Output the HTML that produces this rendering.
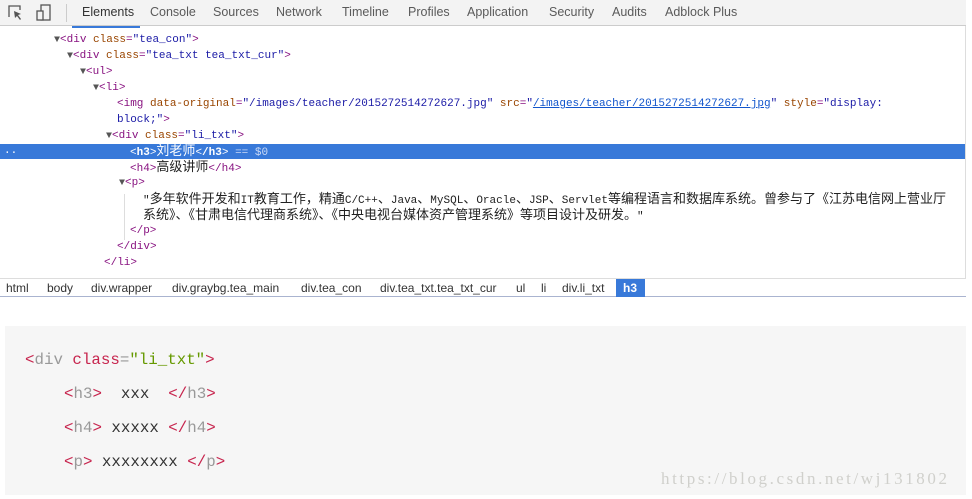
<!DOCTYPE html>
<html><head><meta charset="utf-8"><style>
*{margin:0;padding:0;box-sizing:border-box}
body{width:972px;height:499px;background:#fff;position:relative;overflow:hidden;font-family:"Liberation Sans","Noto Sans CJK SC",sans-serif}
.tb{position:absolute;left:0;top:0;width:966px;height:26px;background:#f3f3f3;border-bottom:1px solid #ccc}
.tab{position:absolute;top:5px;font-size:12.5px;color:#5a5a5a}
.ln{position:absolute;font-family:"Liberation Mono","Noto Sans CJK SC",monospace;font-size:11px;white-space:pre;color:#881280;line-height:16px;height:16px}
.c{font-family:"Noto Sans CJK SC",sans-serif;font-size:13px;line-height:13px}
.a{color:#994500}.v{color:#1a1aa6}.t{color:#222}.tri{color:#555;font-size:10px}
.bc{position:absolute;top:281px;font-size:12px;color:#333}
.code{position:absolute;font-family:"Liberation Mono",monospace;font-size:15.8px;white-space:pre;color:#333}
.r{color:#c7254e}.g{color:#999}.o{color:#690}
</style></head><body>
<div class="tb">
<svg style="position:absolute;left:8px;top:5px" width="16" height="16"><path d="M1 12V1h11v4" fill="none" stroke="#555" stroke-width="1.3"/><path d="M6 6l7 3-3 1 3 4-1 1-3-4-2 2z" fill="#555"/></svg>
<svg style="position:absolute;left:36px;top:4px" width="16" height="18"><rect x="5" y="1" width="9" height="15" fill="none" stroke="#555" stroke-width="1.3"/><rect x="1" y="7" width="6" height="9" fill="#f3f3f3" stroke="#555" stroke-width="1.3"/></svg>
<div style="position:absolute;left:66px;top:4px;width:1px;height:18px;background:#ccc"></div>
<span class="tab" style="left:82px;color:#333">Elements</span>
<span class="tab" style="left:150px">Console</span>
<span class="tab" style="left:213px">Sources</span>
<span class="tab" style="left:276px">Network</span>
<span class="tab" style="left:342px">Timeline</span>
<span class="tab" style="left:408px">Profiles</span>
<span class="tab" style="left:467px">Application</span>
<span class="tab" style="left:549px">Security</span>
<span class="tab" style="left:612px">Audits</span>
<span class="tab" style="left:665px">Adblock Plus</span>
</div>
<div style="position:absolute;left:72px;top:26px;width:68px;height:2px;background:#3879d9"></div>
<div style="position:absolute;left:965px;top:26px;width:1px;height:252px;background:#ddd"></div>
<div style="position:absolute;left:0;top:144px;width:965px;height:15px;background:#3879d9"></div>
<div style="position:absolute;left:124px;top:194px;width:1px;height:46px;background:#ddd"></div>
<div class="ln" style="left:54px;top:32px"><span class="tri">▼</span>&lt;div <span class="a">class</span>=<span class="v">"tea_con"</span>&gt;</div>
<div class="ln" style="left:67px;top:48px"><span class="tri">▼</span>&lt;div <span class="a">class</span>=<span class="v">"tea_txt tea_txt_cur"</span>&gt;</div>
<div class="ln" style="left:80px;top:64px"><span class="tri">▼</span>&lt;ul&gt;</div>
<div class="ln" style="left:93px;top:80px"><span class="tri">▼</span>&lt;li&gt;</div>
<div class="ln" style="left:117px;top:96px">&lt;img <span class="a">data-original</span>=<span class="v">"/images/teacher/2015272514272627.jpg"</span> <span class="a">src</span>=<span class="v">"<u style="color:#1155cc">/images/teacher/2015272514272627.jpg</u>"</span> <span class="a">style</span>=<span class="v">"display:</span></div>
<div class="ln" style="left:117px;top:112px"><span class="v">block;"</span>&gt;</div>
<div class="ln" style="left:106px;top:128px"><span class="tri">▼</span>&lt;div <span class="a">class</span>=<span class="v">"li_txt"</span>&gt;</div>
<div class="ln" style="left:4px;top:143px;color:#fff">..</div>
<div class="ln" style="left:130px;top:143px;color:#fff">&lt;<b>h3</b>&gt;<span class="c">刘老师</span>&lt;<b>/h3</b>&gt; <span style="color:#c9d8f5">== $0</span></div>
<div class="ln" style="left:130px;top:159px">&lt;h4&gt;<span class="t c">高级讲师</span>&lt;/h4&gt;</div>
<div class="ln" style="left:119px;top:175px"><span class="tri">▼</span>&lt;p&gt;</div>
<div class="ln t" style="left:143px;top:191px">"<span class="c">多年软件开发和</span>IT<span class="c">教育工作，精通</span>C/C++<span class="c">、</span>Java<span class="c">、</span>MySQL<span class="c">、</span>Oracle<span class="c">、</span>JSP<span class="c">、</span>Servlet<span class="c">等编程语言和数据库系统。曾参与了《江苏电信网上营业厅</span></div>
<div class="ln t" style="left:143px;top:207px"><span class="c">系统》、《甘肃电信代理商系统》、《中央电视台媒体资产管理系统》等项目设计及研发。</span>"</div>
<div class="ln" style="left:130px;top:223px">&lt;/p&gt;</div>
<div class="ln" style="left:117px;top:239px">&lt;/div&gt;</div>
<div class="ln" style="left:104px;top:255px">&lt;/li&gt;</div>
<div style="position:absolute;left:0;top:278px;width:966px;height:19px;border-top:1px solid #ddd;border-bottom:1px solid #aab4d0;background:#fff"></div>
<span class="bc" style="left:6px">html</span>
<span class="bc" style="left:47px">body</span>
<span class="bc" style="left:91px">div.wrapper</span>
<span class="bc" style="left:172px">div.graybg.tea_main</span>
<span class="bc" style="left:301px">div.tea_con</span>
<span class="bc" style="left:380px">div.tea_txt.tea_txt_cur</span>
<span class="bc" style="left:516px">ul</span>
<span class="bc" style="left:541px">li</span>
<span class="bc" style="left:562px">div.li_txt</span>
<div style="position:absolute;left:616px;top:279px;width:29px;height:18px;background:#3879d9"></div>
<span class="bc" style="left:623px;color:#fff;font-weight:bold">h3</span>
<div style="position:absolute;left:5px;top:326px;width:961px;height:169px;background:#f6f6f6"></div>
<div class="code" style="left:25px;top:351px"><span class="r">&lt;</span><span class="g">div</span> <span class="r">class</span><span class="g">=</span><span class="o">"li_txt"</span><span class="r">&gt;</span></div>
<div class="code" style="left:64px;top:385px"><span class="r">&lt;</span><span class="g">h3</span><span class="r">&gt;</span>  xxx  <span class="r">&lt;/</span><span class="g">h3</span><span class="r">&gt;</span></div>
<div class="code" style="left:64px;top:419px"><span class="r">&lt;</span><span class="g">h4</span><span class="r">&gt;</span> xxxxx <span class="r">&lt;/</span><span class="g">h4</span><span class="r">&gt;</span></div>
<div class="code" style="left:64px;top:453px"><span class="r">&lt;</span><span class="g">p</span><span class="r">&gt;</span> xxxxxxxx <span class="r">&lt;/</span><span class="g">p</span><span class="r">&gt;</span></div>
<div style="position:absolute;left:661px;top:469px;font-family:'Liberation Serif',serif;font-size:17px;letter-spacing:2.6px;color:#d0d0cc;white-space:nowrap">https://blog.csdn.net/wj131802</div>
</body></html>
